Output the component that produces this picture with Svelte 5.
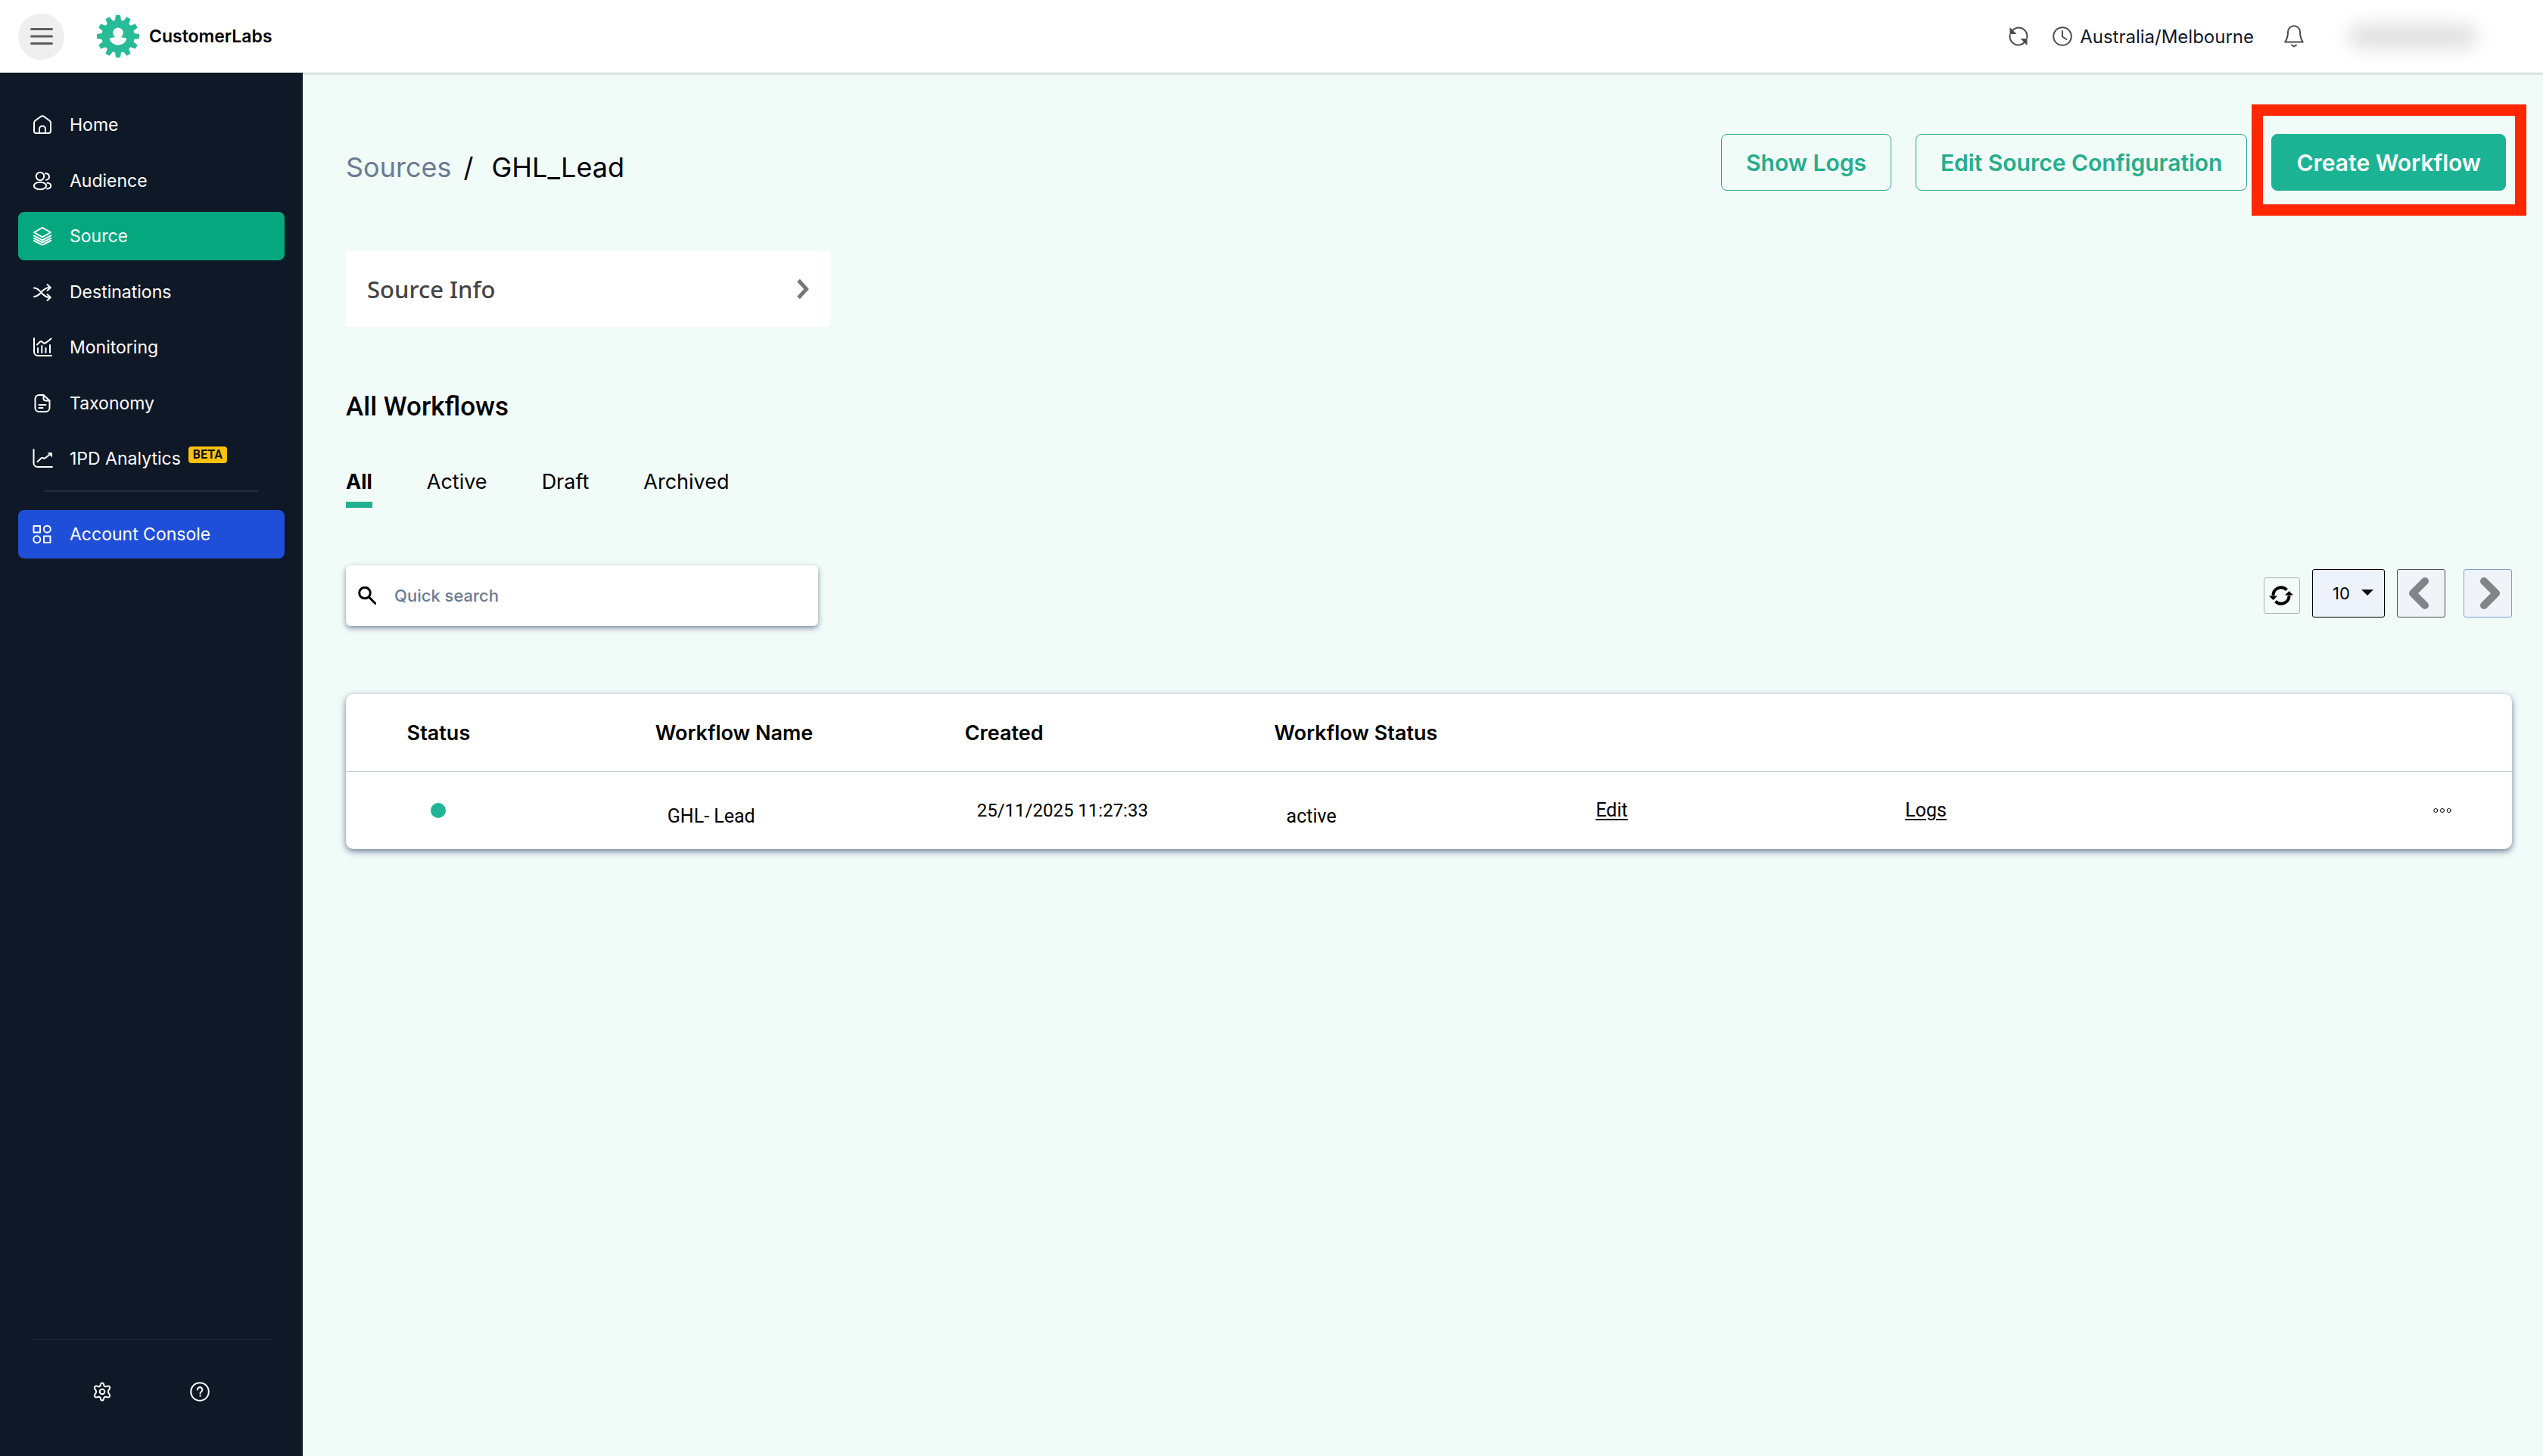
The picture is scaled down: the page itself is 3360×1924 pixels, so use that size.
<script>
  const nav = [
    { label: 'Home', icon: 'home' },
    { label: 'Audience', icon: 'audience' },
    { label: 'Source', icon: 'source', active: true },
    { label: 'Destinations', icon: 'shuffle' },
    { label: 'Monitoring', icon: 'monitor' },
    { label: 'Taxonomy', icon: 'doc' },
    { label: '1PD Analytics', icon: 'trend', badge: 'BETA' }
  ];
  const tabs = ['All', 'Active', 'Draft', 'Archived'];
  const teeth = Array.from({ length: 12 }, (_, i) => i * 30);
  const rows = [{ name: 'GHL- Lead', created: '25/11/2025 11:27:33', status: 'active' }];
  let tab = $state('All');
  let pageSize = $state('10');
  let query = $state('');
</script>

{#snippet icon(name)}
  <svg class="icon {name}" viewBox="0 0 24 24" aria-hidden="true">
    {#if name === 'home'}
      <path d="M1 9.5a4 4 0 0 1 1.400-3L9.600 1.200a4 4 0 0 1 4.800 0l7.200 5.300a4 4 0 0 1 1.400 3V20a3 3 0 0 1-3 3H4a3 3 0 0 1-3-3z" />
      <path d="M8 23v-5.500a4 4 0 0 1 8 0V23" />
    {:else if name === 'audience'}
      <circle cx="9" cy="6" r="5.200" />
      <ellipse cx="9" cy="18.500" rx="8.200" ry="4.700" />
      <path d="M16 2.200c3 0 5 1.700 5 4.300s-2 4.300-4 4.300M18.500 14.800c3 .3 4.700 1.600 4.700 3.700s-1.700 3.700-5 4" />
    {:else if name === 'source'}
      <path d="M12 .8l11 6.200-11 6.300L1 7z" />
      <path d="M.8 11.300L12 17.300l11.200-6M.8 14.800L12 20.300l11.200-5.500M.8 18L12 23.600l11.200-5.600" />
    {:else if name === 'shuffle'}
      <path d="M1 6.500c9 0 10 12.500 20 12.500M1 18c9 0 10-12 20-12" />
      <path d="M18.500 2l4.300 4-4.300 4M18.500 15l4.300 4-4.300 4" />
    {:else if name === 'monitor'}
      <path d="M1 0v18a5 5 0 0 0 5 5h18M6 19v-6M11.300 19V10M16.500 19v-6M22 19V9" />
      <path d="M5 8.500l4-4c2-1.500 3 1 5 2 1.500.8 3-.5 9.500-6" />
    {:else if name === 'doc'}
      <path d="M13.500 1H7.500a5 5 0 0 0-5 5v12a5 5 0 0 0 5 5h9a5 5 0 0 0 5-5V8.500z" />
      <path d="M13.500 1v4.500a3 3 0 0 0 3 3h5M7.500 14h9M7.500 18h5" />
    {:else if name === 'trend'}
      <path d="M0.500 0v18a5 5 0 0 0 5 5H25M5.500 16l5.500-5c1.500-1 3 1.500 4.500 0.500L23 5.500" />
      <path class="solid" d="M18.500 4h6.500v6.500z" />
    {:else if name === 'grid'}
      <path d="M.5 1h8.500v8.500H.5zM14 14.500h8.500V23H14z" />
      <circle cx="18.300" cy="5.200" r="4.500" /><circle cx="4.800" cy="18.800" r="4.500" />
    {/if}
  </svg>
{/snippet}

<div class="app">
  <header>
    <button class="menu" aria-label="Toggle menu">
      <svg viewBox="0 0 30 22"><path d="M1.500 1.500h27M1.500 11h27M1.500 20.500h27" /></svg>
    </button>
    <a class="brand" href="#home">
      <svg viewBox="-29 -29 58 58" aria-hidden="true">
        <g class="gear">
          <circle r="22.500" />
          {#each teeth as angle}
            <path d="M-4.500-20L-3-29H3L4.500-20z" transform="rotate({angle})" />
          {/each}
        </g>
        <g class="person">
          <circle cy="-5" r="7" />
          <path d="M-3.800-1h7.600c0 2 .8 3 7.700 3.200C11.500 8.300 6 12 0 12S-11.500 8.300-11.500 2.200c6.900-.2 7.700-1.200 7.700-3.200z" />
        </g>
      </svg>
      CustomerLabs
    </a>
    <div class="tools">
      <button class="plain" aria-label="Refresh">
        <svg class="line26" viewBox="0 0 26 26">
          <path d="M24.200 15a11.200 11.200 0 0 0-19.500-9.500M1.800 11a11.200 11.200 0 0 0 19.500 9.500" />
          <path class="solid" d="M1.500 1v9h9zM24.500 25v-9h-9z" />
        </svg>
      </button>
      <button class="plain zone">
        <svg class="line26" viewBox="0 0 26 26"><circle cx="13" cy="13" r="11.800" /><path d="M13 6v7.500l5.500 3.500" /></svg>
        Australia/Melbourne
      </button>
      <button class="plain" aria-label="Notifications">
        <svg class="bell" viewBox="0 0 26 30">
          <path d="M13 1.200c-5 0-8 3.800-8 8.500 0 6-1 8.500-3.800 12.800h23.600C22 18.200 21 15.700 21 9.700c0-4.700-3-8.500-8-8.500z" />
          <path d="M10 26.500l3 2 3-2" />
        </svg>
      </button>
      <span class="account"></span>
    </div>
  </header>

  <aside>
    <nav>
      <ul>
        {#each nav as item}
          <li>
            <a href="#{item.icon}" class="item" class:active={item.active}>
              {@render icon(item.icon)}
              <span>{item.label}</span>
              {#if item.badge}<span class="badge">{item.badge}</span>{/if}
            </a>
          </li>
        {/each}
      </ul>
      <hr />
      <a href="#console" class="item console">{@render icon('grid')}<span>Account Console</span></a>
    </nav>
    <div class="foot">
      <button class="plain" aria-label="Settings">
        <svg class="line26" viewBox="0 0 26 26">
          <path d="M11 3.500c.5-2.700 3.500-2.700 4 0 .4 2.600 2 3.300 4.300 2.300 2.800-1.200 5 1.600 3 4-1.700 2-1.700 4.400 0 6.400 2 2.400-.2 5.200-3 4-2.300-1-3.900-.3-4.300 2.300-.5 2.700-3.500 2.700-4 0-.4-2.600-2-3.300-4.300-2.300-2.800 1.200-5-1.600-3-4 1.700-2 1.700-4.400 0-6.400-2-2.400.2-5.200 3-4 2.300 1 3.900.3 4.300-2.300z" />
          <circle cx="13" cy="13" r="3.300" />
        </svg>
      </button>
      <button class="plain" aria-label="Help">
        <svg class="line26" viewBox="0 0 26 26">
          <circle cx="13" cy="13" r="11.800" />
          <path d="M10 10.500a3.200 3.200 0 1 1 5 2.500c-1.300.8-1.500 1.400-1.500 2.500M13.500 18.300v.5" />
        </svg>
      </button>
    </div>
  </aside>

  <main>
    <div class="top">
      <h1><a href="#sources">Sources</a><span class="slash">/</span><span>GHL_Lead</span></h1>
      <div class="actions">
        <button class="btn">Show Logs</button>
        <button class="btn">Edit Source Configuration</button>
        <div class="highlight"><button class="btn primary">Create Workflow</button></div>
      </div>
    </div>

    <button class="info">
      Source Info
      <svg viewBox="0 0 16 26"><path d="M2 1.500L12.500 13 2 24.500" /></svg>
    </button>

    <h2>All Workflows</h2>
    <div class="tabs" role="tablist">
      {#each tabs as name}
        <button role="tab" aria-selected={tab === name} class:on={tab === name} onclick={() => (tab = name)}>{name}</button>
      {/each}
    </div>

    <div class="toolbar">
      <label class="search">
        <svg viewBox="0 0 24 24" aria-hidden="true"><circle cx="9" cy="8.500" r="7.300" /><path d="M14.500 14l8.500 8.500" /></svg>
        <input type="text" placeholder="Quick search" aria-label="Quick search" bind:value={query} />
      </label>
      <div class="pager">
        <button class="reload" aria-label="Reload">
          <svg viewBox="0 0 32 28">
            <path d="M5.500 14A10.500 10.500 0 0 1 23.500 6.500M26.500 14A10.500 10.500 0 0 1 8.500 21.500" />
            <path class="solid" d="M0 14.500h11L5.500 20zM21 13.500h11L26.500 8z" />
          </svg>
        </button>
        <div class="size">
          <select aria-label="Rows per page" bind:value={pageSize}>
            <option>10</option><option>25</option><option>50</option>
          </select>
          <svg viewBox="0 0 16 8" aria-hidden="true"><path d="M0 0h16L8 8z" /></svg>
        </div>
        <button class="step prev" aria-label="Previous page"><svg viewBox="0 0 26 42"><path d="M21 5L5 21l16 16" /></svg></button>
        <button class="step next" aria-label="Next page"><svg viewBox="0 0 26 42"><path d="M5 5l16 16L5 37" /></svg></button>
      </div>
    </div>

    <table>
      <thead>
        <tr>
          <th class="first">Status</th><th>Workflow Name</th><th>Created</th><th>Workflow Status</th>
          <td></td><td></td><td></td>
        </tr>
      </thead>
      <tbody>
        {#each rows as row}
          <tr>
            <td class="first"><span class="dot"></span></td>
            <td class="low">{row.name}</td>
            <td>{row.created}</td>
            <td class="low">{row.status}</td>
            <td><a href="#edit">Edit</a></td>
            <td><a href="#logs">Logs</a></td>
            <td class="more">
              <button class="plain" aria-label="More actions">
                <svg viewBox="0 0 24 8"><circle cx="3.300" cy="4" r="2.500" /><circle cx="12" cy="4" r="2.500" /><circle cx="20.700" cy="4" r="2.500" /></svg>
              </button>
            </td>
          </tr>
        {/each}
      </tbody>
    </table>
  </main>
</div>

<style>
  :global(body) { background: #f1fbf8; }
  .app {
    display: grid;
    grid-template: 96px 1fr / 400px 1fr;
    min-height: 100vh;
    font-family: Inter, "Open Sans", sans-serif;
    font-size: 24px;
    color: #000;
  }
  .app * { box-sizing: border-box; }
  button, select, input { font: inherit; color: inherit; }
  button { cursor: pointer; }
  a { color: inherit; text-decoration: none; }
  svg { display: block; fill: none; stroke: currentColor; stroke-width: 2; stroke-linecap: round; stroke-linejoin: round; flex: none; }
  .solid { fill: currentColor; stroke: none; }
  .plain { display: flex; align-items: center; padding: 0; border: 0; background: none; }
  .line26 { width: 26px; height: 26px; }

  header {
    grid-column: 1 / -1;
    display: flex;
    align-items: center;
    padding: 0 88px 0 24px;
    background: #fff;
    box-shadow: 0 1px 4px rgba(0, 0, 0, 0.24);
  }
  .menu { display: grid; place-items: center; width: 61px; height: 61px; padding: 0; border: 0; border-radius: 50%; background: #efefef; color: #5e5e5e; }
  .menu svg { width: 30px; height: 22px; stroke-width: 3; }
  .brand { display: flex; align-items: center; gap: 13px; margin-left: 43px; font-size: 24px; font-weight: 600; }
  .brand { font-size: 23px; line-height: 32px; }
  .brand svg { width: 56px; height: 58px; stroke: none; }
  .gear { fill: #27bb97; }
  .person { fill: #fff; }
  .tools { display: flex; align-items: center; margin-left: auto; color: #4b4b4b; }
  .tools svg { stroke-width: 2; }
  .zone { gap: 10px; margin: 0 40px 0 32px; color: #111827; }
  .zone svg { color: #4b4b4b; }
  .bell { width: 26px; height: 30px; }
  .account { width: 168px; height: 30px; margin-left: 60px; border-radius: 12px; background: #dedede; filter: blur(12px); }

  aside { display: flex; flex-direction: column; justify-content: space-between; padding: 37px 24px 0; background: #0f1826; color: #fff; }
  ul { display: flex; flex-direction: column; justify-content: space-between; height: 505px; margin: 0; padding: 0; list-style: none; }
  .item { display: flex; align-items: center; height: 64px; padding-left: 20px; border-radius: 8px; font-size: 23px; }
  .icon { width: 24px; height: 24px; margin-right: 24px; overflow: visible; }
  .active { background: #05a87e; }
  .console { background: #1f4fd9; }
  .badge { margin: 0 0 10px 10px; padding: 0 6px; border-radius: 4px; background: #fcc110; color: #111; font: 700 16px/22px Roboto, sans-serif; }
  hr { height: 2px; margin: 10px 35px 24px; border: 0; background: #272f3d; }
  .foot { display: flex; align-items: flex-start; gap: 103px; height: 155px; margin: 0 16px; padding: 56px 0 0 82px; border-top: 1px solid #252c3b; }

  main { padding: 81px 41px 0 57px; }
  .top { display: flex; justify-content: space-between; align-items: center; }
  h1 { display: flex; align-items: center; margin: 0; padding-top: 12px; font-size: 36px; line-height: 44px; font-weight: 400; }
  h1 a { color: #6b7a95; }
  .slash { margin: 0 24px 0 16px; }
  .actions { display: flex; gap: 32px; padding-right: 8px; }
  .btn { height: 75px; padding: 0 32px; border: 1px solid #2ba78d; border-radius: 8px; background: none; color: #25ae8c; font-size: 30px; font-weight: 600; }
  .primary { border-color: #1bb394; background: #1bb394; color: #fff; }
  .highlight { position: relative; }
  .highlight::after { content: ""; position: absolute; inset: -39px -27px -33px -26px; border: 15px solid #ff2600; pointer-events: none; }

  .info { display: flex; align-items: center; justify-content: space-between; width: 640px; height: 100px; margin-top: 80px; padding: 0 28px; border: 0; background: #fff; color: #444; font: 500 31px/40px "Noto Sans", sans-serif; }
  .info svg { width: 16px; height: 26px; color: #777; stroke-width: 5; stroke-linecap: butt; stroke-linejoin: miter; overflow: visible; }

  h2 { margin: 84px 0 0; font: 500 35px/44px Roboto, sans-serif; }
  .tabs { display: flex; gap: 72px; margin-top: 59px; }
  .tabs button { height: 52px; padding: 0 0 8px; border: 0; border-bottom: 8px solid transparent; background: none; font-size: 27px; line-height: 36px; }
  .tabs .on { border-color: #22b18f; font-weight: 700; }

  .toolbar { display: flex; justify-content: space-between; align-items: flex-start; margin-top: 76px; }
  .search { display: flex; align-items: center; gap: 24px; width: 624px; height: 80px; padding: 0 16px; border-radius: 6px; background: #fff; box-shadow: 0 3px 7px rgba(50, 70, 110, 0.6); }
  .search svg { width: 24px; height: 24px; stroke-width: 3; }
  .search input { flex: 1; min-width: 0; padding: 0; border: 0; outline: 0; background: none; font-size: 22px; font-weight: 500; }
  .search input::placeholder { color: #6b7a95; opacity: 1; }
  .pager { display: flex; align-items: center; gap: 16px; padding-top: 5px; }
  .reload { display: grid; place-items: center; width: 48px; height: 48px; margin-top: 6px; padding: 0 2px 0 0; border: 1px solid #a9b3b1; border-radius: 3px; background: #f4fcfa; }
  .reload svg { width: 32px; height: 28px; stroke-width: 4; stroke-linecap: butt; }
  .size { position: relative; }
  .size select { appearance: none; display: block; width: 96px; height: 64px; padding: 0 26px; border: 1px solid #000; border-radius: 3px; background: #eef2fb; font-size: 22px; }
  .size svg { position: absolute; top: 27px; right: 15px; width: 16px; height: 8px; fill: #0b0d12; stroke: none; pointer-events: none; }
  .step { display: grid; place-items: center; width: 64px; height: 64px; border: 1px solid #454a50; border-radius: 3px; background: #f0f4f8; color: #828587; }
  .step svg { width: 26px; height: 42px; stroke-width: 10; }
  .prev { padding: 0 6px 0 0; }
  .next { margin-left: 8px; padding: 0 0 0 6px; border-color: #7aa0c8; }

  table { width: 100%; margin-top: 90px; table-layout: fixed; border-spacing: 0; border-radius: 10px; background: #fff; box-shadow: 0 3px 8px rgba(50, 70, 110, 0.7); }
  th { height: 103px; padding: 0; border-bottom: 1px solid #c6cbcf; text-align: left; font-size: 27px; font-weight: 600; }
  thead td { border-bottom: 1px solid #c6cbcf; }
  td { height: 102px; padding: 0 0 0 16px; font: 400 24px/28px Roboto, sans-serif; }
  .first { padding: 0 164px 0 0; text-align: center; }
  .low { padding-top: 16px; }
  .low, td a { font-size: 25px; }
  td a { text-decoration: underline; text-underline-offset: 3px; }
  .dot { display: block; width: 20px; height: 20px; margin: 0 auto; border-radius: 50%; background: #1fb596; }
  .more .plain { margin: 0 80px 0 auto; }
  .more svg { width: 24px; height: 8px; stroke-width: 1; }
</style>
